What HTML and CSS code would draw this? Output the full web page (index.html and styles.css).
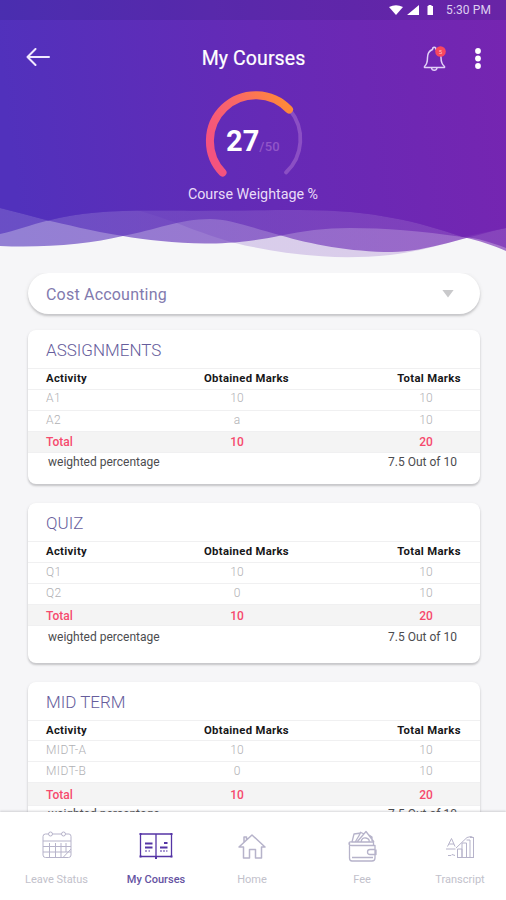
FILE: index.html
```html
<!DOCTYPE html>
<html lang="en">
<head>
<meta charset="utf-8">
<title>My Courses</title>
<link rel="stylesheet" href="styles.css">
</head>
<body>
<div class="app">
  <header class="hero">
    <svg class="waves" viewBox="0 0 506 270" aria-hidden="true">
      <defs>
        <linearGradient id="sky" gradientUnits="userSpaceOnUse" x1="0" y1="60" x2="506" y2="0">
          <stop offset="0" stop-color="#5131bc"/><stop offset=".5" stop-color="#652ab6"/><stop offset="1" stop-color="#7625b1"/>
        </linearGradient>
      </defs>
      <g fill="url(#sky)">
        <path opacity=".2" d="M0 0H506V228C480 232 430 251 390 255C340 260 300 256 253 247C210 239 180 222 140 211L0 190Z"/>
        <path opacity=".6" d="M0 0H506V228C470 236 425 252 392 252C350 252 310 244 281 235.500C253 228 230 219 210 219C180 219 155 230 123 236C90 244 45 248 0 246Z"/>
        <path opacity=".62" d="M0 0H506V248C490 242 478 238 463 237C420 231 385 228 350 228C325 228 302 231 281 235.500C250 242 225 243.500 205 243.500C175 243 145 240 123 236C90 231 65 224 48 220.500Q24 214 0 208Z"/>
        <path opacity=".62" d="M0 0H506V251C492 245 480 241 463 237C418 222 375 210 300 210C250 210 220 211 170 210.500C120 210 85 211 48 220.500C30 225 15 231 0 234Z"/>
        <path d="M0 0H506V228L463 237C418 222 375 210 300 210C250 210 220 211 170 210.500C120 210 85 211 48 220.500Q24 214 0 208Z"/>
      </g>
    </svg>
    <div class="status">
      <svg width="46" height="12" viewBox="0 0 46 12" fill="#fff"><path d="M0 3Q7-.5 14 3L7 11ZM18 11 30 1V11ZM38.500 2h1V1h3v1h1.500v9h-5.500Z"/></svg>
      <span class="clock">5:30 PM</span>
    </div>
    <div class="topbar">
      <svg class="back" width="24" height="18" viewBox="0 0 24 18"><path d="M9.500 1 1.500 9l8 8M1.500 9H23"/></svg>
      <h1>My Courses</h1>
      <div class="actions">
        <svg width="24" height="28" viewBox="0 0 24 28"><path class="bell" d="M1.500 21.500C4 19.500 4.500 17 4.500 12.500 4.500 8 7 5.500 9.500 4.500 9.500 1.500 13 1.500 13 4.500 16 5.500 18 8 18 12.500 18 17 19 19.500 21.500 21.500V22.500H1.500ZM8.500 23C9 26 13.500 26 14 23"/><circle cx="17.500" cy="6.500" r="5.300" fill="#f9475f"/><text class="badge" x="17.500" y="8.800">5</text></svg>
        <svg class="more" width="6" height="22" viewBox="0 0 6 22" fill="#fff"><circle cx="3" cy="3" r="2.900"/><circle cx="3" cy="10.500" r="2.900"/><circle cx="3" cy="18" r="2.900"/></svg>
      </div>
    </div>
    <div class="gauge">
      <svg width="104" height="92" viewBox="202 88 104 92">
        <defs><linearGradient id="heat" x1="0" y1=".6" x2="1" y2="0"><stop offset="0" stop-color="#f4537f"/><stop offset=".5" stop-color="#fa6965"/><stop offset="1" stop-color="#ff8e32"/></linearGradient></defs>
        <path d="M286 173.500A46 46 0 0 0 290 111" fill="none" stroke="#8b4fc4" stroke-width="3.800" stroke-linecap="round"/>
        <path d="M222.500 173.500A45.500 45.500 0 1 1 289 110.500" fill="none" stroke="url(#heat)" stroke-width="8" stroke-linecap="round"/>
      </svg>
      <div class="score"><b>27</b><span>/50</span></div>
    </div>
    <p class="caption">Course Weightage %</p>
  </header>

  <main class="content">
    <div class="select"><span>Cost Accounting</span><i></i></div>

    <section class="card first">
      <h2>ASSIGNMENTS</h2>
      <div class="row head"><span>Activity</span><span>Obtained Marks</span><span>Total Marks</span></div>
      <div class="row item"><span>A1</span><span>10</span><span>10</span></div>
      <div class="row item second"><span>A2</span><span>a</span><span>10</span></div>
      <div class="row total"><span>Total</span><span>10</span><span>20</span></div>
      <div class="weighted"><span>weighted percentage</span><span>7.5 Out of 10</span></div>
    </section>

    <section class="card quiz">
      <h2>QUIZ</h2>
      <div class="row head"><span>Activity</span><span>Obtained Marks</span><span>Total Marks</span></div>
      <div class="row item"><span>Q1</span><span>10</span><span>10</span></div>
      <div class="row item"><span>Q2</span><span>0</span><span>10</span></div>
      <div class="row total"><span>Total</span><span>10</span><span>20</span></div>
      <div class="weighted"><span>weighted percentage</span><span>7.5 Out of 10</span></div>
    </section>

    <section class="card mid">
      <h2>MID TERM</h2>
      <div class="row head"><span>Activity</span><span>Obtained Marks</span><span>Total Marks</span></div>
      <div class="row item"><span>MIDT-A</span><span>10</span><span>10</span></div>
      <div class="row item"><span>MIDT-B</span><span>0</span><span>10</span></div>
      <div class="row total"><span>Total</span><span>10</span><span>20</span></div>
      <div class="weighted"><span>weighted percentage</span><span>7.5 Out of 10</span></div>
    </section>
  </main>

  <nav class="tabs">
    <a class="tab leave"><svg width="36" height="34" viewBox="0 0 36 34"><path d="M9.500 5H6.500Q4 5 4 7.500V26Q4 28.500 6.500 28.500H29.500Q32 28.500 32 26V7.500Q32 5 30 5H26.500M13.500 5H22.500M4 12H32M4 17.500H32M4 23H32M10.500 14V28M16.500 14V28M22 14V28M27 14V23M24 28.500 32 20"/><circle cx="11.500" cy="5" r="2"/><circle cx="24.500" cy="5" r="2"/></svg><span>Leave Status</span></a>
    <a class="tab active courses"><svg width="36" height="34" viewBox="0 0 36 34"><path d="M2.500 5H33.500V27.500H2.500ZM18 5V29.500" stroke-width="1.300"/><path d="M7 14.500H14.500M7 18.500H14.500M26 14H29.500M22 18.500H29.500" stroke-width="1.800"/><path d="M7 22H9M10.500 22H12M22 22H24M25 22H27M28 22H29.500" stroke-width="1.200"/><path d="M1.500 4h2v2h-2zM32.500 4h2v2h-2zM1.500 26.500h2v2h-2zM32.500 26.500h2v2h-2zM17 28h2v2h-2z" fill="#5535a5" stroke="none"/></svg><span>My Courses</span></a>
    <a class="tab home"><svg width="36" height="34" viewBox="0 0 36 34"><path stroke-width="1.500" d="M5 18 18 6 31 18H27.500V29H21.500V20.500H15.500V29H9.500V18ZM10 13V8H12.500V11"/></svg><span>Home</span></a>
    <a class="tab fee"><svg width="36" height="34" viewBox="0 0 36 34"><path stroke-width="1.300" d="M5.500 14V29Q5.500 32 8 32H28Q31 32 31 29V16.500H8Q5 16.500 5 14.500T8 13H29.500V16.500M31 20.500H26Q23.500 20.500 23.500 23T26 25.500H32V20.500M8 28.500H29M8 13 10 5 17 4M11.500 12.500 16 5M13 13 22 2.500 30 13M17 13Q18 8 22 9T25 13M20 5 16 3M25 6 28 8V12"/></svg><span>Fee</span></a>
    <a class="tab transcript"><svg width="36" height="34" viewBox="0 0 36 34"><path d="M5.500 17.500 9.500 9.500 13 17.500M7 15H12M4 20H13.500M6 26.500H9L10 25.500 13 26.500M15.500 28.500V20H20V28.500M20 28.500V14H24.500V28.500M24.500 11H28V28.500M28 8.500H31.500V28.500M15 28.500H32M14 19 25 8.500 29 7.500 32 9"/></svg><span>Transcript</span></a>
  </nav>
</div>
</body>
</html>
```
FILE: styles.css
```css
* { box-sizing: border-box; }
body { margin: 0; background: #f6f6f8; font-family: Roboto, sans-serif; }
h1, h2, p { margin: 0; font-weight: 400; }
.app { height: 900px; width: 506px; display: flex; flex-direction: column; overflow: hidden; position: relative; }

.hero { height: 273px; flex: none; position: relative; color: #fff; }
.waves { position: absolute; left: 0; top: 0; width: 506px; height: 270px; z-index: -1; }
.status { height: 20px; background: rgba(40, 30, 110, .16); display: flex; align-items: center; justify-content: flex-end; gap: 11px; padding-right: 15px; }
.clock { font-size: 12px; color: #ddcff0; width: 45px; white-space: nowrap; letter-spacing: .15px; }
.topbar { height: 66px; display: grid; grid-template-columns: 90px 1fr 90px; align-items: center; padding: 8px 24px 0 25px; }
.back { fill: none; stroke: #f1e9ff; stroke-width: 2; stroke-linecap: round; stroke-linejoin: round; margin-left: 1px; }
h1 { font-size: 19.5px; line-height: 24px; text-align: center; padding-top: 3px; letter-spacing: .1px; -webkit-text-stroke: .2px #fff; }
.actions { display: flex; justify-content: flex-end; align-items: center; gap: 28px; padding: 3px 1px 0 0; }
.bell { fill: none; stroke: #e1d0f7; stroke-width: 1.500; stroke-linejoin: round; }
.badge { font-size: 6px; fill: #ffc2cc; text-anchor: middle; }
.gauge { width: 104px; height: 92px; margin: 1px 0 0 202px; display: grid; }
.gauge > * { grid-area: 1 / 1; }
.score { display: flex; align-items: baseline; padding: 37px 0 0 24px; }
.score b { font-size: 29px; line-height: 34px; }
.score span { font-size: 13px; color: #9156c8; font-weight: 500; letter-spacing: .3px; }
.caption { font-size: 14.3px; line-height: 18px; text-align: center; color: #e9dcf8; margin-top: 6px; }

.content { flex: 1; min-height: 0; overflow: hidden; padding: 0 26px 0 28px; }
.select { height: 41px; border-radius: 21px; background: #fff; box-shadow: 0 2px 2px #c8c8cb, 0 1px 4px #dededf; display: flex; justify-content: space-between; align-items: center; padding: 0 26px 0 18px; font-size: 16px; letter-spacing: .2px; color: #827aae; }
.select span { padding-top: 1px; }
.select i { width: 12px; height: 8px; background: #c9c9cb; clip-path: polygon(0 0, 100% 0, 50% 100%); }
.card { background: #fff; border-radius: 8px; box-shadow: 0 2px 2px #c8c8cb, 0 1px 3px #dedee0; margin-top: 19px; height: 160px; }
.card.first { height: 154px; margin-top: 16px; }
h2 { font-size: 17px; font-weight: 300; line-height: 40px; height: 39px; padding-left: 18px; color: #665d9c; border-bottom: 1px solid #f0f0f1; }
.row { height: 21px; line-height: 18px; display: grid; grid-template-columns: 142px 134px 1fr; padding-left: 18px; border-bottom: 1px solid #f0f0f1; font-size: 12px; }
.row span { text-align: center; white-space: nowrap; }
.row span:first-child { text-align: left; }
.row.head { font-size: 11.3px; font-weight: 700; color: #171719; letter-spacing: .32px; line-height: 19px; }
.row.head span:nth-child(2) { padding-right: 17px; }
.row.head span:nth-child(3) { padding-left: 56px; }
.row.item { color: #b0b0b4; font-weight: 300; line-height: 17px; }
.row.item span:first-child { letter-spacing: .4px; }
.row.item span:nth-child(2), .row.total span:nth-child(2) { padding-right: 36px; }
.row.item span:nth-child(3), .row.total span:nth-child(3) { padding-left: 50px; }
.row.total { background: #f4f4f4; color: #f64a6d; font-weight: 500; line-height: 20px; }
.first .second { line-height: 19px; }
.weighted { display: flex; justify-content: space-between; padding: 0 23px 0 20px; font-size: 12px; line-height: 18px; color: #4c4c4f; }
.quiz .row.head { line-height: 20px; }
.quiz .row.item { line-height: 18px; }
.quiz .row.total { line-height: 22px; }
.quiz .weighted { padding-top: 2px; }
.mid .row { height: 20px; line-height: 20px; }
.mid .row.item { height: 21px; line-height: 19px; }
.mid .row.total { height: 23px; line-height: 24px; }
.mid .weighted { line-height: 16px; }

.tabs { height: 88px; flex: none; background: #fff; box-shadow: 0 -1px 2px rgba(120, 120, 130, .3); display: grid; grid-template-columns: 113px 86px 106px 114px 82px; position: relative; }
.tab { display: flex; flex-direction: column; align-items: center; padding-top: 17px; font-size: 11px; line-height: 13px; color: #c2c1cb; }
.tab svg { fill: none; stroke: #b6b3ca; stroke-width: 1; stroke-linejoin: round; }
.tab span { margin-top: 10px; white-space: nowrap; }
.tab.active { color: #6553a2; font-weight: 500; }
.tab.active svg { stroke: #5535a5; }
```
